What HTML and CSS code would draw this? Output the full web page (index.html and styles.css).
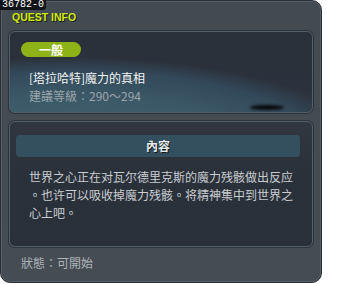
FILE: index.html
```html
<!DOCTYPE html>
<html>
<head>
<meta charset="utf-8">
<link rel="stylesheet" href="styles.css">
</head>
<body>
<div class="panel">
  <div class="quest-id">36782-0</div>
  <div class="title">QUEST INFO</div>
  <div class="box head-box">
    <div class="badge">一般</div>
    <div class="quest-name">[塔拉哈特]魔力的真相</div>
    <div class="quest-level">建議等級：290～294</div>
    <div class="shadow"></div>
  </div>
  <div class="box content-box">
    <div class="content-bar">內容</div>
    <div class="content-text">
      <div class="line">世界之心正在对瓦尔德里克斯的魔力残骸做出反应</div>
      <div class="line">。也许可以吸收掉魔力残骸。将精神集中到世界之</div>
      <div class="line">心上吧。</div>
    </div>
  </div>
  <div class="status">狀態：可開始</div>
</div>
</body>
</html>
```
FILE: styles.css
```css
html, body {
  margin: 0;
  padding: 0;
  background: #ffffff;
}
body {
  font-family: "Noto Sans CJK TC", "Noto Sans CJK SC", sans-serif;
  font-size: 12px;
}
.panel {
  position: relative;
  box-sizing: border-box;
  width: 322px;
  height: 283px;
  padding: 0 8px;
  background: linear-gradient(#434a52, #454c54);
  border: 1px solid #2a2f35;
  border-radius: 10px;
  box-shadow: inset 0 0 0 1px #575e66;
}
.quest-id {
  position: absolute;
  left: -1px;
  top: -1px;
  padding: 0 2px 0 2px;
  height: 10px;
  line-height: 10px;
  background: #111417;
  color: #ffffff;
  font-family: "Liberation Mono", monospace;
  font-size: 10px;
  border-bottom-right-radius: 3px;
}
.title {
  box-sizing: border-box;
  height: 30px;
  padding: 10px 0 0 3px;
  line-height: 12px;
  font-family: "Liberation Sans", sans-serif;
  font-weight: bold;
  font-size: 10.5px;
  color: #d2ea12;
  text-shadow: 1px 1px 0 #1c2208;
}
.box {
  position: relative;
  box-sizing: border-box;
  border: 1px solid #4f5e69;
  border-radius: 6px;
  box-shadow: 0 0 0 1px #2e343b;
}
.head-box {
  height: 82px;
  padding: 10px 0 0 19px;
  overflow: hidden;
  background:
    radial-gradient(ellipse 300px 95px at 60px 120px, #446773 0%, #3b5866 60%, #33495a 85%, rgba(43,49,59,0) 100%),
    linear-gradient(#2a303a, #2c333e);
}
.badge {
  width: 60px;
  height: 15px;
  margin-left: -8px;
  border-radius: 8px;
  background: #8db319;
  color: #ffffff;
  font-weight: bold;
  line-height: 15px;
  text-align: center;
  margin-bottom: 12px;
}
.quest-name {
  line-height: 18px;
  color: #f2f4f5;
}
.quest-level {
  line-height: 18px;
  color: #9ba4ab;
}
.shadow {
  position: absolute;
  left: 240px;
  top: 73px;
  width: 34px;
  height: 5px;
  border-radius: 50%;
  background: #06080a;
  filter: blur(1.5px);
}
.content-box {
  height: 126px;
  margin-top: 8px;
  padding: 13px 12px 0 6px;
  background: linear-gradient(#303740, #2b313b 40%, #2a303a);
}
.content-bar {
  height: 22px;
  line-height: 22px;
  border-radius: 4px;
  background: #34505e;
  text-align: center;
  font-weight: bold;
  color: #e9edef;
  text-shadow: 1px 1px 0 #101418;
}
.content-text {
  margin-top: 11px;
  padding-left: 13px;
  color: #c9cdd1;
  line-height: 18px;
  white-space: nowrap;
}
.status {
  margin-top: 7px;
  padding-left: 12px;
  line-height: 18px;
  color: #aeb4ba;
}
```
